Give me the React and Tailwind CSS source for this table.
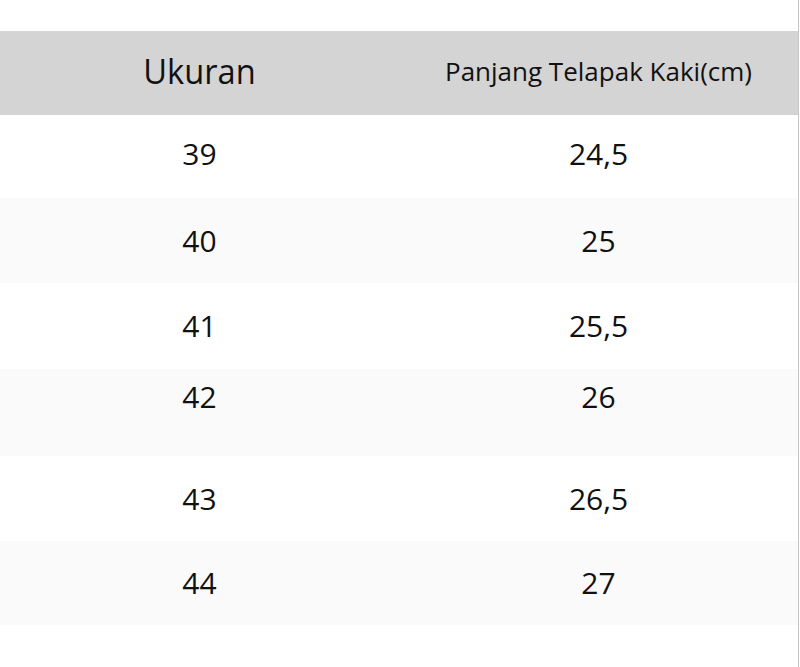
import React from "react";

const rows = [
  { s: "39", v: "24,5", h: "h-[83px]", bg: "bg-white", align: "items-center pb-[5px]" },
  { s: "40", v: "25", h: "h-[85px]", bg: "bg-[#fafafa]", align: "items-center" },
  { s: "41", v: "25,5", h: "h-[86px]", bg: "bg-white", align: "items-center" },
  { s: "42", v: "26", h: "h-[87px]", bg: "bg-[#fafafa]", align: "items-start pt-[13px]" },
  { s: "43", v: "26,5", h: "h-[85px]", bg: "bg-white", align: "items-center" },
  { s: "44", v: "27", h: "h-[84px]", bg: "bg-[#fafafa]", align: "items-center" },
];

export default function App() {
  return (
    <div className="w-[800px] h-[667px] bg-white overflow-hidden" style={{ fontFamily: '"Open Sans", "Noto Sans", sans-serif' }}>
      <div className="w-[799px] h-full border-r border-[#c6c6c6] flex flex-col text-[#111]">
        <div className="h-[31px] bg-white" />
        <div className="h-[84px] bg-[#d4d4d4] grid grid-cols-2 items-center">
          <div className="text-center text-[34px] leading-none pb-[4px] scale-x-[0.96]">Ukuran</div>
          <div className="text-center text-[26px] leading-none pb-[4px]">Panjang Telapak Kaki(cm)</div>
        </div>
        {rows.map((r) => (
          <div key={r.s} className={`${r.h} ${r.bg} grid grid-cols-2 ${r.align}`}>
            <div className="text-center text-[30px] leading-none">{r.s}</div>
            <div className="text-center text-[30px] leading-none">{r.v}</div>
          </div>
        ))}
        <div className="flex-1 bg-white" />
      </div>
    </div>
  );
}
